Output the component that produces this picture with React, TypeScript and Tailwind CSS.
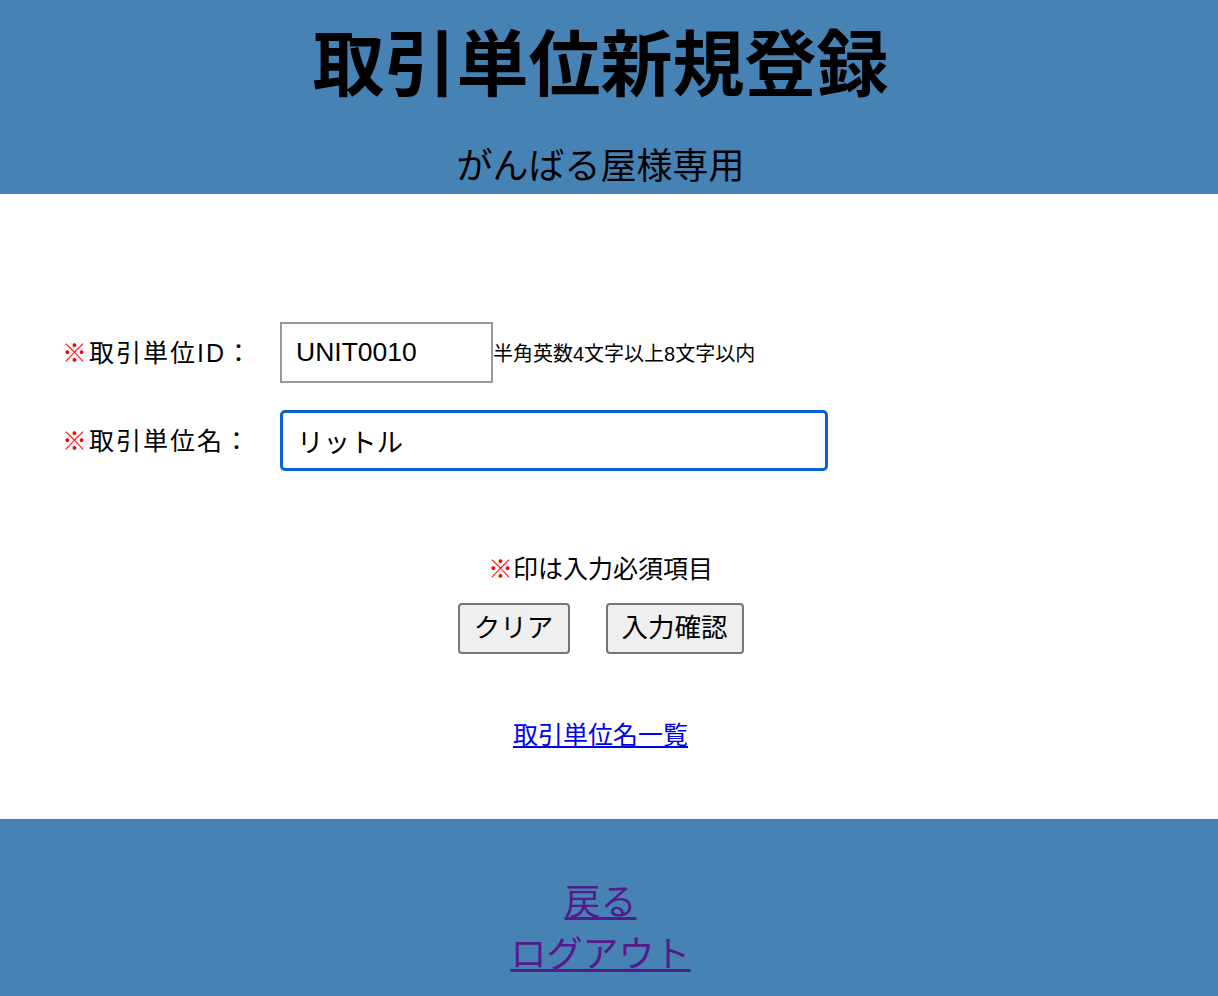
import React from 'react';

const font = { fontFamily: '"Liberation Sans", "Noto Sans CJK JP", sans-serif' };

export default function App() {
  return (
    <div className="min-h-[996px] bg-white text-black" style={font}>
      {/* header */}
      <header className="bg-[#4682b4] flex flex-col items-center pt-[29px] pb-[9px] pr-[17px]">
        <h1 className="text-[72px] leading-[72px] font-bold">取引単位新規登録</h1>
        <p className="mt-[48px] text-[36px] leading-[36px]">がんばる屋様専用</p>
      </header>

      {/* form */}
      <main className="flex flex-col pt-[128px] pb-[69px]">
        <div className="flex items-center pl-[62px]">
          <label className="w-[218px] text-[25px] tracking-[2px] pt-[3px]">
            <span className="text-[#ff0000]">※</span>取引単位ID：
          </label>
          <input
            defaultValue="UNIT0010"
            className="w-[213px] h-[61px] border-2 border-[#999999] px-[14px] text-[26.5px] outline-none"
          />
          <span className="text-[20px] pt-[2px]">半角英数4文字以上8文字以内</span>
        </div>
        <div className="flex items-center pl-[62px] mt-[27px]">
          <label className="w-[218px] text-[25px] tracking-[2px] pt-[3px]">
            <span className="text-[#ff0000]">※</span>取引単位名：
          </label>
          <input
            defaultValue="リットル"
            className="w-[548px] h-[61px] border-[3px] border-[#0a60d4] rounded-[5px] px-[14px] text-[26.5px] outline-none"
          />
        </div>

        <p className="mt-[86px] text-center text-[25px] leading-[25px] pr-[17px]">
          <span className="text-[#ff0000]">※</span>印は入力必須項目
        </p>
        <div className="flex justify-center gap-[36px] mt-[21px] pr-[17px]">
          <button className="h-[51px] w-[112px] bg-[#efefef] border-2 border-[#767676] rounded-[4px] text-[26.5px]">
            クリア
          </button>
          <button className="h-[51px] w-[138px] bg-[#efefef] border-2 border-[#767676] rounded-[4px] text-[26.5px]">
            入力確認
          </button>
        </div>
        <div className="flex justify-center mt-[66px] pr-[17px]">
          <a href="#" className="text-[25px] leading-[30px] text-[#0000ee] underline">
            取引単位名一覧
          </a>
        </div>
      </main>

      {/* footer */}
      <footer className="bg-[#4682b4] flex flex-col items-center pt-[58px] pb-[40px] pr-[17px]">
        <a href="#" className="text-[36px] leading-[52px] text-[#551a8b] underline">戻る</a>
        <a href="#" className="text-[36px] leading-[52px] text-[#551a8b] underline">ログアウト</a>
      </footer>
    </div>
  );
}
